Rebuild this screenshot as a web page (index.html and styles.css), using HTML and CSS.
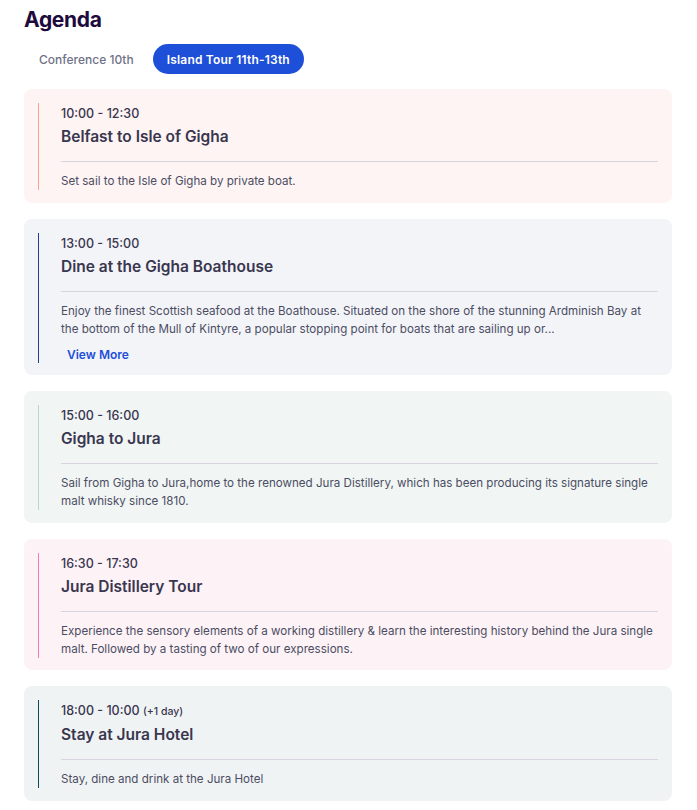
FILE: index.html
```html
<!DOCTYPE html>
<html>
<head>
    <meta name="viewport" content="width=device-width, initial-scale=1.0">
    <title>Agenda</title>
    <link rel="stylesheet" href="styles.css">
</head>
<body>
    <div class="agenda">
        <h1 class="agenda-title">Agenda</h1>

        <div class="tabs">
            <button class="tab">Conference 10th</button>
            <button class="tab tab-active">Island Tour 11th-13th</button>
        </div>

        <div class="slots">
            <div class="slot slot-salmon">
                <div class="slot-inner">
                    <div class="slot-time">10:00 - 12:30</div>
                    <h3 class="slot-name">Belfast to Isle of Gigha</h3>
                    <div class="slot-desc">Set sail to the Isle of Gigha by private boat.</div>
                </div>
            </div>

            <div class="slot slot-navy">
                <div class="slot-inner">
                    <div class="slot-time">13:00 - 15:00</div>
                    <h3 class="slot-name">Dine at the Gigha Boathouse</h3>
                    <div class="slot-desc">Enjoy the finest Scottish seafood at the Boathouse. Situated on the shore of the stunning Ardminish Bay at the bottom of the Mull of Kintyre, a popular stopping point for boats that are sailing up or...</div>
                    <a class="view-more" href="#">View More</a>
                </div>
            </div>

            <div class="slot slot-mint">
                <div class="slot-inner">
                    <div class="slot-time">15:00 - 16:00</div>
                    <h3 class="slot-name">Gigha to Jura</h3>
                    <div class="slot-desc">Sail from Gigha to Jura,home to the renowned Jura Distillery, which has been producing its signature single malt whisky since 1810.</div>
                </div>
            </div>

            <div class="slot slot-pink">
                <div class="slot-inner">
                    <div class="slot-time">16:30 - 17:30</div>
                    <h3 class="slot-name">Jura Distillery Tour</h3>
                    <div class="slot-desc">Experience the sensory elements of a working distillery &amp; learn the interesting history behind the Jura single malt. Followed by a tasting of two of our expressions.</div>
                </div>
            </div>

            <div class="slot slot-teal">
                <div class="slot-inner">
                    <div class="slot-time">18:00 - 10:00 <span class="next-day">(+1 day)</span></div>
                    <h3 class="slot-name">Stay at Jura Hotel</h3>
                    <div class="slot-desc">Stay, dine and drink at the Jura Hotel</div>
                </div>
            </div>
        </div>
    </div>
</body>
</html>
```

FILE: styles.css
```css
body {
    font-family: 'Inter', 'Liberation Sans', sans-serif;
    margin: 0;
    padding: 0;
    background: #fff;
    color: #39364f;
}

.agenda {
    padding: 6px 25px 0 24px;
}

.agenda-title {
    margin: 0;
    font-size: 21px;
    font-weight: 700;
    line-height: 28px;
    color: #1e0a3c;
    letter-spacing: -0.3px;
}

.tabs {
    display: flex;
    gap: 4px;
    margin-top: 10px;
}

.tab {
    font-family: inherit;
    background: none;
    border: none;
    border-radius: 16px;
    padding: 0 15px;
    height: 30px;
    font-size: 12px;
    font-weight: 500;
    color: #6f7287;
    cursor: pointer;
}

.tab-active {
    background: #1e4fd9;
    color: #fff;
    font-weight: 600;
    letter-spacing: 0.2px;
    padding: 0 14px;
}

.slots {
    display: flex;
    flex-direction: column;
    gap: 16px;
    margin-top: 15px;
}

.slot {
    border-radius: 8px;
    padding: 14px 14px 12.5px;
}

.slot-inner {
    border-left: 1px solid;
    padding-left: 22px;
}

.slot-salmon { background: #fef4f3; }
.slot-salmon .slot-inner { border-color: #f6a58f; }

.slot-navy { background: #f3f4f8; }
.slot-navy .slot-inner { border-color: #233f93; }

.slot-mint { background: #f1f5f4; }
.slot-mint .slot-inner { border-color: #b3dcc8; }

.slot-pink { background: #fdf2f6; }
.slot-pink .slot-inner { border-color: #f57ab8; }

.slot-teal { background: #f0f3f4; }
.slot-teal .slot-inner { border-color: #0e4a56; }

.slot-time {
    font-size: 12.5px;
    font-weight: 500;
    line-height: 18px;
    padding-top: 2px;
}

.next-day {
    font-size: 10.5px;
}

.slot-name {
    margin: 3px 0 0;
    font-size: 15.5px;
    font-weight: 600;
    line-height: 22px;
    padding-bottom: 13px;
    border-bottom: 1px solid #d8d5e0;
}

.slot-desc {
    font-size: 11.6px;
    line-height: 18px;
    margin-top: 10px;
    color: #4b4d63;
}

.view-more {
    display: inline-block;
    margin: 9px 0 1px 6px;
    font-size: 12px;
    font-weight: 600;
    color: #1e4fd9;
    text-decoration: none;
}
```
